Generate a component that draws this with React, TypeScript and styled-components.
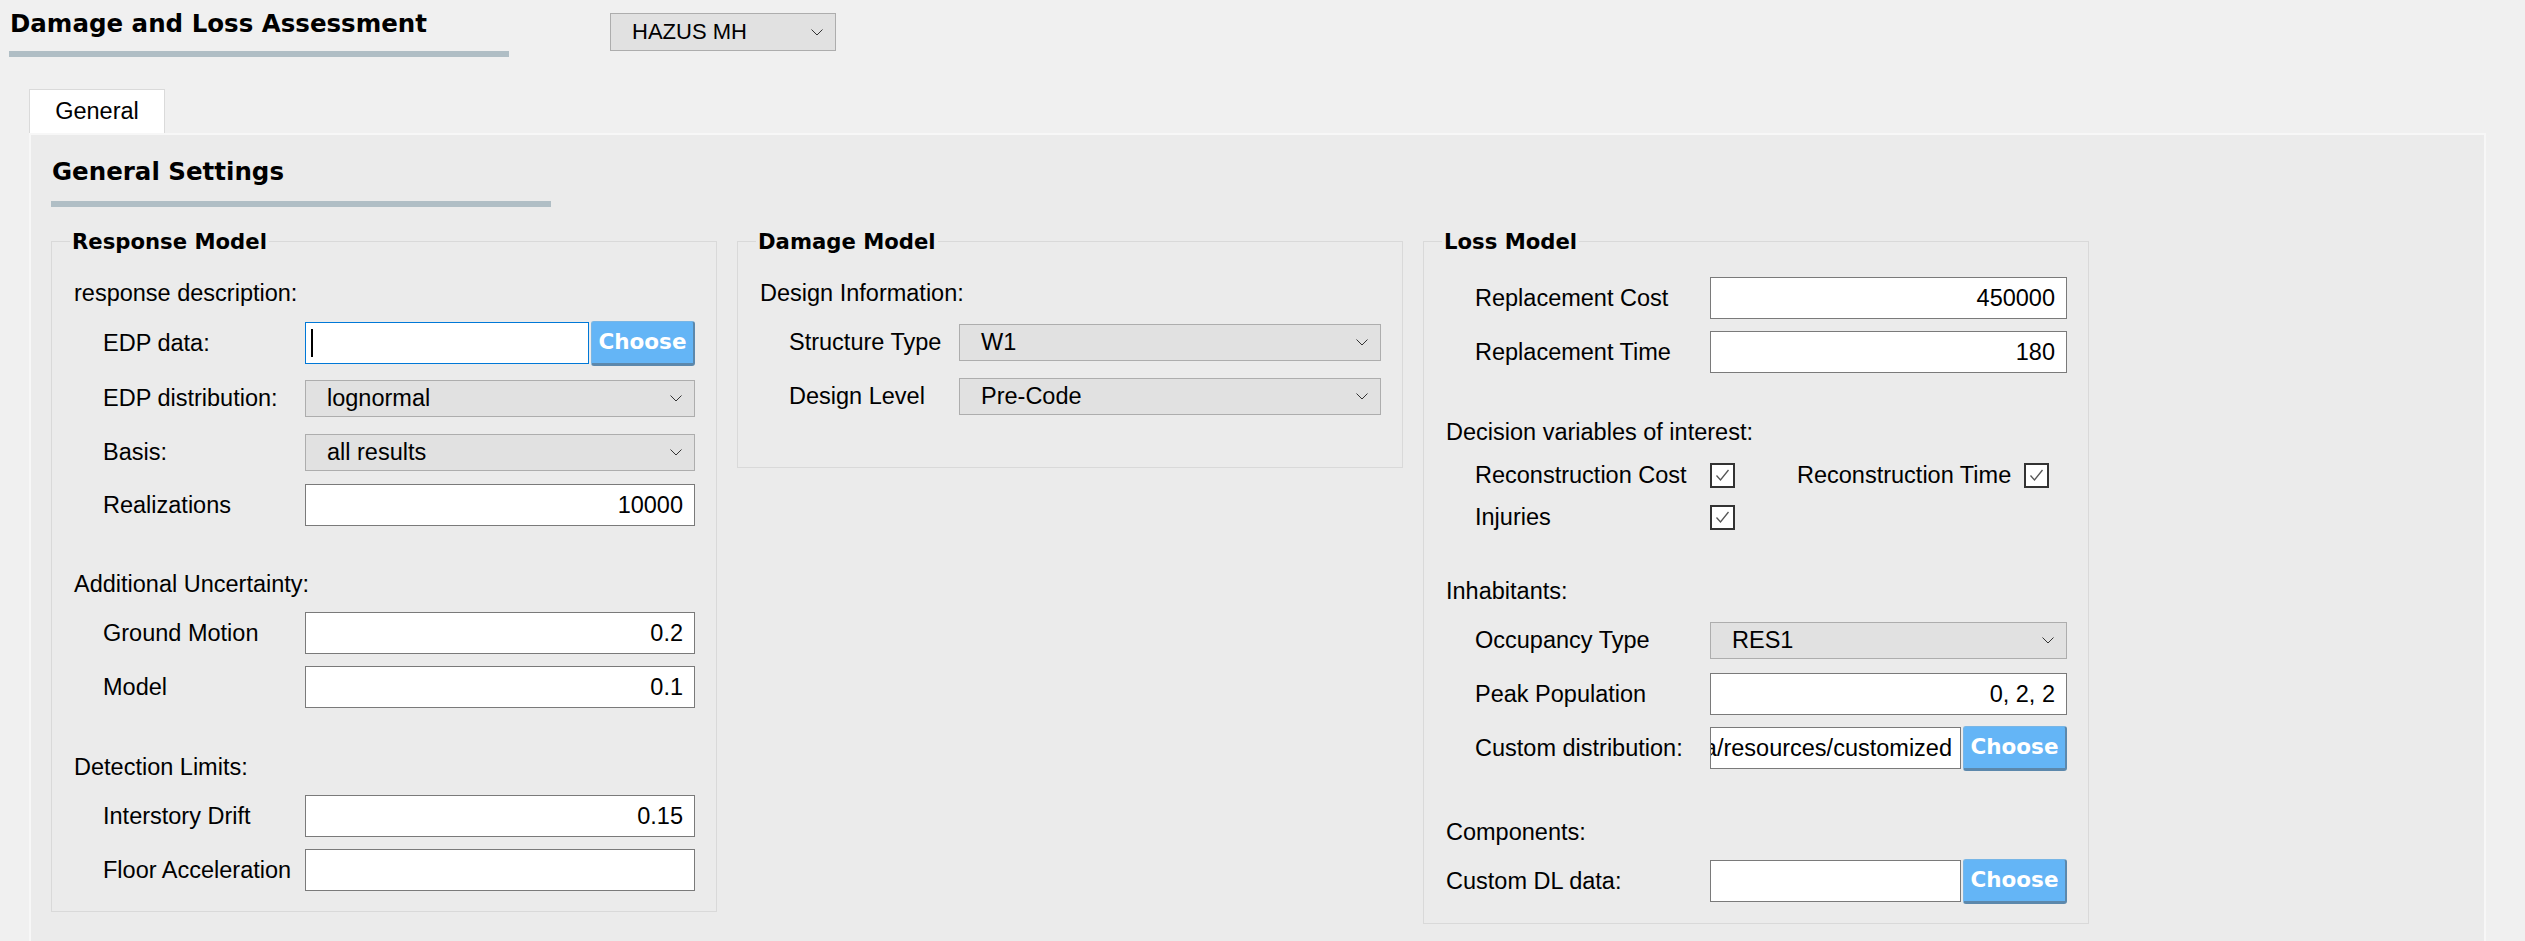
import React from "react";
import styled, { createGlobalStyle } from "styled-components";

const GlobalStyle = createGlobalStyle`
  html, body { margin: 0; padding: 0; background: #f0f0f0; }
  body {
    font-family: "Liberation Sans", Arial, sans-serif;
    font-size: 23.5px;
    color: #000;
  }
  * { box-sizing: border-box; }
`;

const Page = styled.div`
  width: 2525px;
  height: 941px;
  overflow: hidden;
  background: #f0f0f0;
`;

const Header = styled.header`
  display: flex;
  align-items: flex-start;
  padding: 9px 0 0 9px;
`;

const TitleBlock = styled.div`
  display: flex;
  flex-direction: column;
  width: 500px;
`;

const Title = styled.h1`
  margin: 0;
  padding-left: 1px;
  font: bold 24.5px/30px "DejaVu Sans", sans-serif;
  white-space: nowrap;
`;

const HeadingBar = styled.div<{ $gap: number }>`
  width: 500px;
  height: 6px;
  margin-top: ${p => p.$gap}px;
  background: #b0bec5;
`;

const Select = styled.div<{ $h?: number }>`
  flex: 1;
  display: flex;
  align-items: center;
  justify-content: space-between;
  height: ${p => p.$h ?? 37}px;
  padding: 0 12px 0 21px;
  background: #e1e1e1;
  border: 1px solid #adadad;
  white-space: nowrap;
`;

const ModelSelect = styled.div`
  display: flex;
  width: 226px;
  margin: 4px 0 0 101px;
  font-size: 22px;
`;

const TabBar = styled.div`
  display: flex;
  margin-top: 32px;
  padding-left: 29px;
`;

const Tab = styled.div`
  width: 136px;
  height: 44px;
  display: flex;
  align-items: center;
  justify-content: center;
  background: #fff;
  border: 1px solid #dadada;
  border-bottom: none;
`;

const Pane = styled.main`
  width: 2457px;
  height: 820px;
  margin-left: 29px;
  padding: 22.5px 20px 0 20px;
  background: #ebebeb;
  border: 2px solid #f7f7f7;
  border-bottom: none;
`;

const SettingsTitle = styled.h2`
  margin: 0;
  padding-left: 1px;
  font: bold 24.5px/28px "DejaVu Sans", sans-serif;
  white-space: nowrap;
`;

const GroupRow = styled.div`
  display: flex;
  align-items: flex-start;
  gap: 20px;
  margin-top: 21.5px;
`;

const GroupBox = styled.fieldset`
  width: 666px;
  min-width: 0;
  margin: 0;
  padding: 0;
  border: 1px solid #d9d9d9;
`;

const GroupTitle = styled.legend`
  margin-left: 18px;
  padding: 0 2px;
  font: bold 21.2px/26px "DejaVu Sans", sans-serif;
  white-space: nowrap;
`;

const GroupBody = styled.div<{ $pb: number }>`
  display: flex;
  flex-direction: column;
  padding: 16.5px 21px ${p => p.$pb}px 22px;
`;

const Section = styled.section<{ $mt?: number }>`
  display: flex;
  flex-direction: column;
  margin-top: ${p => p.$mt ?? 0}px;
`;

const SectionLabel = styled.div`
  height: 44px;
  line-height: 44px;
  white-space: nowrap;
`;

const Row = styled.div<{ $flush?: boolean; $h?: number }>`
  display: flex;
  align-items: center;
  height: ${p => p.$h ?? 54}px;
  padding-left: ${p => (p.$flush ? 0 : 29)}px;
`;

const Label = styled.div<{ $w: number }>`
  flex: 0 0 ${p => p.$w}px;
  white-space: nowrap;
`;

const Control = styled.div`
  flex: 1;
  min-width: 0;
  display: flex;
  align-items: center;
  gap: 2px;
`;

const Field = styled.div<{ $right?: boolean; $focus?: boolean }>`
  flex: 1;
  min-width: 0;
  height: 42px;
  display: flex;
  align-items: center;
  justify-content: ${p => (p.$right ? "flex-end" : "flex-start")};
  padding: 0 11px 0 5px;
  overflow: hidden;
  white-space: nowrap;
  background: #fff;
  border: 1px solid ${p => (p.$focus ? "#0078d7" : "#7a7a7a")};
`;

const PathField = styled(Field)`
  justify-content: flex-end;
  padding-right: 8px;
`;

const Caret = styled.span`
  width: 2px;
  height: 28px;
  background: #000;
`;

const ChooseButton = styled.button`
  flex: 0 0 104px;
  height: 45px;
  padding: 0 0 1px;
  border: 1px solid #78b6e6;
  border-right: 2px solid #5c88ac;
  border-bottom: 3px solid #5c88ac;
  border-radius: 3px;
  background: #64b5f6;
  color: #fff;
  font: bold 21.5px "DejaVu Sans", sans-serif;
`;

const CheckRow = styled.div`
  display: flex;
  align-items: center;
  height: 42px;
  padding-left: 29px;
`;

const CheckLabel = styled.div<{ $w?: number; $ml?: number }>`
  flex: 0 0 ${p => (p.$w ? `${p.$w}px` : "auto")};
  margin-left: ${p => p.$ml ?? 0}px;
  margin-right: ${p => (p.$w ? 0 : 13)}px;
  white-space: nowrap;
`;

const CheckBox = styled.span`
  display: flex;
  width: 25px;
  height: 25px;
  background: #fff;
  border: 2px solid #333;
`;

function Chevron() {
  return (
    <svg width="12" height="7" viewBox="0 0 12 7">
      <polyline points="0.5,0.5 6,6 11.5,0.5" fill="none" stroke="#333" strokeWidth="1" />
    </svg>
  );
}

function Combo({ value, h }: { value: string; h?: number }) {
  return (
    <Select $h={h}>
      <span>{value}</span>
      <Chevron />
    </Select>
  );
}

function Check() {
  return (
    <CheckBox>
      <svg width="21" height="21" viewBox="0 0 21 21">
        <polyline points="4.5,10.5 8.5,15 16.5,5" fill="none" stroke="#555" strokeWidth="1.3" />
      </svg>
    </CheckBox>
  );
}

function FormRow({ label, w, flush, h, children }: {
  label: string; w: number; flush?: boolean; h?: number; children: React.ReactNode;
}) {
  return (
    <Row $flush={flush} $h={h}>
      <Label $w={flush ? w + 29 : w}>{label}</Label>
      <Control>{children}</Control>
    </Row>
  );
}

export default function App() {
  return (
    <Page>
      <GlobalStyle />
      <Header>
        <TitleBlock>
          <Title>Damage and Loss Assessment</Title>
          <HeadingBar $gap={12} />
        </TitleBlock>
        <ModelSelect>
          <Combo value="HAZUS MH" h={38} />
        </ModelSelect>
      </Header>

      <TabBar>
        <Tab>General</Tab>
      </TabBar>

      <Pane>
        <SettingsTitle>General Settings</SettingsTitle>
        <HeadingBar $gap={15.5} />

        <GroupRow>
          <GroupBox>
            <GroupTitle>Response Model</GroupTitle>
            <GroupBody $pb={14}>
              <Section>
                <SectionLabel>response description:</SectionLabel>
                <FormRow label="EDP data:" w={202} h={56}>
                  <Field $focus><Caret /></Field>
                  <ChooseButton>Choose</ChooseButton>
                </FormRow>
                <FormRow label="EDP distribution:" w={202}>
                  <Combo value="lognormal" />
                </FormRow>
                <FormRow label="Basis:" w={202}>
                  <Combo value="all results" />
                </FormRow>
                <FormRow label="Realizations" w={202} h={52}>
                  <Field $right>10000</Field>
                </FormRow>
              </Section>
              <Section $mt={31}>
                <SectionLabel>Additional Uncertainty:</SectionLabel>
                <FormRow label="Ground Motion" w={202}>
                  <Field $right>0.2</Field>
                </FormRow>
                <FormRow label="Model" w={202}>
                  <Field $right>0.1</Field>
                </FormRow>
              </Section>
              <Section $mt={31}>
                <SectionLabel>Detection Limits:</SectionLabel>
                <FormRow label="Interstory Drift" w={202}>
                  <Field $right>0.15</Field>
                </FormRow>
                <FormRow label="Floor Acceleration" w={202}>
                  <Field $right />
                </FormRow>
              </Section>
            </GroupBody>
          </GroupBox>

          <GroupBox>
            <GroupTitle>Damage Model</GroupTitle>
            <GroupBody $pb={44}>
              <Section>
                <SectionLabel>Design Information:</SectionLabel>
                <FormRow label="Structure Type" w={170}>
                  <Combo value="W1" />
                </FormRow>
                <FormRow label="Design Level" w={170}>
                  <Combo value="Pre-Code" />
                </FormRow>
              </Section>
            </GroupBody>
          </GroupBox>

          <GroupBox>
            <GroupTitle>Loss Model</GroupTitle>
            <GroupBody $pb={15}>
              <Section>
                <FormRow label="Replacement Cost" w={235}>
                  <Field $right>450000</Field>
                </FormRow>
                <FormRow label="Replacement Time" w={235}>
                  <Field $right>180</Field>
                </FormRow>
              </Section>
              <Section $mt={31}>
                <SectionLabel>Decision variables of interest:</SectionLabel>
                <CheckRow>
                  <CheckLabel $w={235}>Reconstruction Cost</CheckLabel>
                  <Check />
                  <CheckLabel $ml={62}>Reconstruction Time</CheckLabel>
                  <Check />
                </CheckRow>
                <CheckRow>
                  <CheckLabel $w={235}>Injuries</CheckLabel>
                  <Check />
                </CheckRow>
              </Section>
              <Section $mt={31}>
                <SectionLabel>Inhabitants:</SectionLabel>
                <FormRow label="Occupancy Type" w={235}>
                  <Combo value="RES1" />
                </FormRow>
                <FormRow label="Peak Population" w={235}>
                  <Field $right>0, 2, 2</Field>
                </FormRow>
                <FormRow label="Custom distribution:" w={235}>
                  <PathField>C:/Users/SimCenter/pelicun/data/resources/customized</PathField>
                  <ChooseButton>Choose</ChooseButton>
                </FormRow>
              </Section>
              <Section $mt={35}>
                <SectionLabel>Components:</SectionLabel>
                <FormRow label="Custom DL data:" w={235} flush>
                  <Field />
                  <ChooseButton>Choose</ChooseButton>
                </FormRow>
              </Section>
            </GroupBody>
          </GroupBox>
        </GroupRow>
      </Pane>
    </Page>
  );
}
